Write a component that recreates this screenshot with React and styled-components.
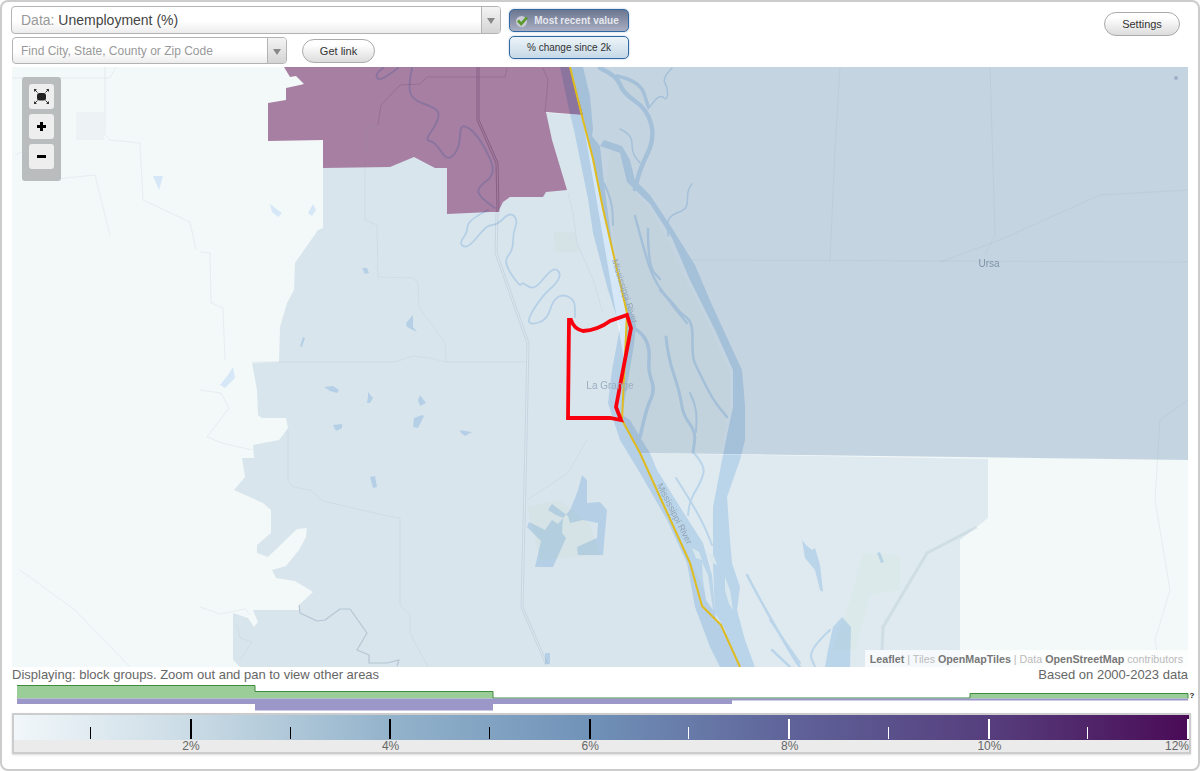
import styled, { createGlobalStyle } from "styled-components";

const GlobalStyle = createGlobalStyle`
  html, body {
    margin: 0;
    padding: 0;
    height: 771px;
    overflow: hidden;
    background: #fff;
    font-family: "Liberation Sans", Arial, sans-serif;
  }
`;

const Frame = styled.div`
  box-sizing: border-box;
  width: 1200px;
  height: 771px;
  border: 2px solid #ccc;
  border-radius: 8px;
  padding: 4px 10px 0 9px;
  background: #fff;
`;

const TopBar = styled.header`
  display: flex;
  align-items: flex-start;
  height: 61px;
`;

const SearchColumn = styled.div`
  display: flex;
  flex-direction: column;
  gap: 3px;
  width: 490px;
`;

const SelectBox = styled.div`
  box-sizing: border-box;
  display: flex;
  align-items: center;
  height: ${(p) => p.$height}px;
  width: ${(p) => p.$width}px;
  margin-left: ${(p) => p.$indent || 0}px;
  border: 1px solid #b3b3b3;
  border-radius: 4px;
  background: linear-gradient(#fff 55%, #ececec);
`;

const SelectText = styled.div`
  flex: 1;
  padding-left: ${(p) => p.$pad}px;
  font-size: ${(p) => p.$size}px;
  color: #999;
  white-space: nowrap;
`;

const DataValue = styled.span`
  color: #444;
`;

const SelectArrow = styled.div`
  box-sizing: border-box;
  width: 19px;
  height: 100%;
  display: flex;
  align-items: center;
  justify-content: center;
  border-left: 1px solid #b3b3b3;
  background: linear-gradient(#f4f4f4, #d4d4d4);
  border-radius: 0 3px 3px 0;
  &::after {
    content: "";
    margin-top: 2px;
    border-left: 4px solid transparent;
    border-right: 4px solid transparent;
    border-top: 6px solid #888;
  }
`;

const FindRow = styled.div`
  display: flex;
  align-items: center;
  gap: 15px;
`;

const PillButton = styled.button`
  box-sizing: border-box;
  width: ${(p) => p.$width}px;
  height: 24px;
  margin: ${(p) => p.$margin || 0};
  padding: 0;
  border: 1px solid #aaa;
  border-radius: 12px;
  background: linear-gradient(#fff 20%, #dcdcdc);
  color: #333;
  font: 11px "Liberation Sans", Arial, sans-serif;
`;

const ToggleColumn = styled.div`
  display: flex;
  flex-direction: column;
  gap: 4px;
  margin: 3px 0 0 8px;
`;

const Toggle = styled.button`
  box-sizing: border-box;
  display: flex;
  align-items: center;
  justify-content: center;
  gap: 5px;
  width: 120px;
  height: 23px;
  padding: 0 ${(p) => (p.$active ? "4px" : "0")} 0 0;
  border: 1px solid #2f6aa5;
  border-radius: 5px;
  box-shadow: 0 0 2px rgba(90, 120, 160, 0.5);
  font: ${(p) => (p.$active ? "bold " : "")}10px "Liberation Sans", Arial, sans-serif;
  color: ${(p) => (p.$active ? "#e6e8ee" : "#333")};
  background: ${(p) =>
    p.$active
      ? "linear-gradient(#6b7690, #a9aec2)"
      : "linear-gradient(#edf4f8, #c6d9e7)"};
`;

const MapPanel = styled.div`
  position: relative;
  width: 1176px;
  height: 600px;
  margin-left: 1px;
  overflow: hidden;
  background: #f3f8f9;
`;

const MapSvg = styled.svg`
  display: block;
  isolation: isolate;
`;

const WaterLayer = styled.g`
  mix-blend-mode: multiply;
`;

const Region = styled.polygon`
  fill: ${(p) => p.$fill};
`;

const WaterShape = styled.polygon`
  fill: #d6e8f8;
`;

const Stream = styled.path`
  fill: none;
  stroke: #d6e8f8;
  stroke-width: ${(p) => p.$w};
  stroke-linejoin: round;
  stroke-linecap: round;
`;

const Road = styled.polyline`
  fill: none;
  stroke: ${(p) => p.$color || "rgba(120, 145, 165, 0.1)"};
  stroke-width: ${(p) => p.$w || 1};
  stroke-linejoin: round;
`;

const PlaceLabel = styled.text`
  font: ${(p) => p.$size}px "Liberation Sans", Arial, sans-serif;
  fill: ${(p) => p.$color};
  text-anchor: middle;
`;

const ZoomPanel = styled.div`
  position: absolute;
  left: 10px;
  top: 10px;
  box-sizing: border-box;
  width: 39px;
  height: 104px;
  padding: 7px;
  display: flex;
  flex-direction: column;
  gap: 5px;
  background: #b9bdbd;
  border-radius: 3px;
`;

const ZoomButton = styled.div`
  width: 25px;
  height: 25px;
  display: flex;
  align-items: center;
  justify-content: center;
  background: #eee;
  border-radius: 3px;
`;

const Attribution = styled.div`
  position: absolute;
  right: 0;
  bottom: 0;
  box-sizing: border-box;
  height: 17px;
  padding: 0 5px;
  display: flex;
  align-items: center;
  gap: 3px;
  background: rgba(255, 255, 255, 0.7);
  font-size: 10.7px;
  color: #bbb;
  white-space: nowrap;
`;

const AttrLink = styled.b`
  color: #777;
`;

const StatusRow = styled.div`
  display: flex;
  justify-content: space-between;
  height: 18px;
  margin-left: 1px;
  width: 1176px;
  font-size: 13px;
  line-height: 15px;
  color: #666;
`;

const HistogramSvg = styled.svg`
  display: block;
  margin-left: 1px;
`;

const QuestionMark = styled.text`
  font: bold 8px "Liberation Sans", Arial, sans-serif;
  fill: #222;
`;

const Legend = styled.div`
  box-sizing: border-box;
  width: 1179px;
  height: 41px;
  margin: 1px 0 0 1px;
  border: 2px solid #ccc;
  box-shadow: 0 1px 2px rgba(0, 0, 0, 0.15);
`;

const LegendBar = styled.div`
  display: grid;
  grid-template-columns: 76.3px repeat(11, 1fr);
  height: 25px;
  padding-right: 2px;
  background: linear-gradient(
    to right,
    #f1f7fa 0%,
    #cadbe5 15%,
    #93b3cb 32%,
    #7092b8 49%,
    #5f6399 66%,
    #563e7d 83%,
    #4a0b56 100%
  );
`;

const TickCell = styled.div`
  display: flex;
  justify-content: flex-end;
  align-items: flex-end;
  padding-bottom: 1px;
`;

const Tick = styled.span`
  display: block;
  margin-right: ${(p) => (p.$major ? -2 : -1)}px;
  width: ${(p) => (p.$major ? 2 : 1)}px;
  height: ${(p) => (p.$major ? 20 : 12)}px;
  background: ${(p) => (p.$light ? "#fff" : "#000")};
`;

const LegendLabels = styled.div`
  display: grid;
  grid-template-columns: 177px repeat(5, 1fr);
  height: 12px;
  background: #ebebeb;
  font-size: 12px;
  line-height: 13px;
  color: #666;
`;

const LegendLabel = styled.div`
  text-align: right;
  & > span {
    display: inline-block;
    transform: translateX(${(p) => (p.$last ? "0" : "50%")});
  }
`;

const purple = "268,103 286,100 286,88 300,85 304,84 296,76 290,77 284,67 570,67 583,115 546,112 552,140 567,190 546,192 543,197 510,197 503,202 498,212 490,212 447,214 447,168 435,168 414,157 390,167 323,168 323,140 268,141";
const lightBlue = "323,168 323,228 318,230 295,263 294,290 287,303 280,327 279,362 252,363 257,390 258,415 262,418 286,418 288,428 279,440 253,445 254,458 242,458 245,477 234,490 263,503 271,510 271,533 257,545 257,553 268,557 297,529 307,528 306,537 299,550 286,566 272,570 276,578 295,581 313,592 299,605 299,610 253,610 258,622 254,627 248,618 233,613 233,660 240,667 740,667 640,453 582,115 500,110 400,150";
const darkBlue = "570,67 1188,67 1188,460 640,453 622,420 627,315 603,209 593,159 582,116";
const southEast = "640,453 988,459 988,518 960,540 960,667 740,667 721,625 702,606 690,563";

const islands = [
  "610,150 622,155 630,185 650,210 670,245 688,285 712,332 730,372 730,405 725,430 722,452 640,452 622,418 632,330 618,266 606,183",
  "617,78 638,83 645,104 625,91",
];

const waterBodies = [
  "560,67 583,67 590,96 593,129 592,136 600,146 604,183 615,266 627,300 636,325 634,345 628,380 622,415 630,420 640,437 650,453 657,470 680,507 703,543 712,575 716,620 755,667 720,667 710,647 695,607 687,563 667,520 640,473 620,440 608,403 612,370 620,327 608,290 593,233 588,199 574,130 570,114",
  "600,146 620,153 627,182 650,204 672,238 690,280 715,330 733,370 733,407 728,430 722,460 713,507 713,567 715,613 737,650 755,667 745,640 737,610 740,587 732,563 730,540 727,497 740,460 745,440 745,405 742,370 712,305 695,265 670,225 650,195 635,180 630,160 622,146 604,140",
  "582,475 587,480 587,503 600,502 607,510 603,555 578,555 577,547 597,538 598,523 583,520 570,523 568,516 552,504 548,510 556,515 563,518 562,533 566,538 553,567 535,567 541,541 527,527 529,522 545,530 552,520 558,524 570,510 575,498 578,490",
  "802,540 806,545 812,550 815,548 820,565 823,592 820,590 815,570 805,558",
  "833,627 842,617 851,627 850,667 825,667 828,650",
  "545,653 550,653 550,664 545,664",
  "233,367 235,378 225,388 220,385 228,375",
  "324,387 333,386 339,390 337,393 330,391",
  "368,392 373,398 370,403 367,403 368,397",
  "420,395 426,403 420,406 418,400",
  "422,415 424,416 418,428 413,427 414,418",
  "333,425 342,424 342,428 336,431",
  "460,430 472,432 465,436 461,433",
  "370,477 375,476 377,487 373,488",
  "270,204 282,213 278,217 272,212",
  "313,204 316,210 312,216 308,213",
  "362,268 367,268 369,273 365,274",
  "413,315 413,327 417,332 407,327 406,323",
  "303,337 305,338 302,347 300,346",
  "153,176 163,176 159,190",
  "877,553 880,552 884,562 881,563",
];

// land showing through the wide channels near the bottom of the river
const riverLand = [
  "725,577 730,590 733,610 729,604 725,590",
  "702,562 708,575 713,610 706,600 703,580",
  "692,548 699,552 702,560 696,558",
  "707,552 714,556 717,565 711,562",
];

const streams = [
  ["600,68 617,76 623,93 647,109 655,138 640,169 635,189", 4.5],
  ["617,76 640,81 648,106", 3.5],
  ["672,68 662,78 668,88 667,101 660,94 648,109", 1.5],
  ["620,129 632,134 632,153 640,163", 1.5],
  ["692,184 687,189 688,209 673,214 667,221 668,236", 1.5],
  ["604,183 612,200 613,225", 2],
  ["635,216 643,246 653,279 673,306 687,323", 2.5],
  ["648,229 648,266 660,279", 2.5],
  ["660,290 673,303 680,313 693,322 692,357 698,370 713,400 727,417", 2.5],
  ["632,327 643,333 650,350 648,370 655,390 647,407 640,437", 3.5],
  ["666,337 668,357 680,393 683,415 696,432 693,452", 3],
  ["690,393 697,407 696,432", 2],
  ["693,452 705,465 702,480 690,500 688,515", 2],
  ["676,478 690,500 704,525 712,545", 2],
  ["660,482 670,500 676,515 690,535", 1.5],
  ["747,575 760,600 793,657 800,667", 2.5],
  ["770,620 800,663", 2],
  ["772,650 790,667", 2.5],
  ["830,630 808,650 815,667", 2],
  ["488,210 468,220 467,233 460,242 463,247 470,246 487,225 497,225 510,212 518,220 513,233 513,250 503,262 520,287 522,282 530,288 537,287 553,267 561,273 557,283 543,295 528,318 530,325 547,320 553,300 563,294 575,300 575,317", 1.8],
  ["398,68 380,82 375,75 383,68", 2],
  ["412,68 408,87 413,100 433,107 440,113 435,127 425,140 435,142 448,162 460,147 460,125 470,128 482,142 497,173 477,188 480,197 495,208", 2],
];

const roads = [
  "378,125 366,127 365,170 365,220 377,225 378,277 413,278 418,283 419,307 445,343 446,362",
  "252,362 395,362 413,356 430,358 446,362 526,362",
  "288,430 288,480 293,487 310,490 323,501 383,515 400,518 400,605 410,615 410,633 428,667",
  "200,390 221,393 229,408 207,437 222,443 252,450",
  "200,607 220,614 245,609 250,615",
  "237,625 240,638 252,642 240,660",
  "200,252 210,253 211,303 223,308 225,360",
  "12,78 110,78 116,67",
  "105,67 105,135 110,140 140,143 143,200 190,222 196,250",
  "15,155 30,148 45,180 95,175 110,235",
  "20,570 75,610 130,667",
  "840,67 835,150 830,260",
  "692,260 1188,262",
  "990,67 995,235 985,255",
  "1188,190 1100,195 1000,240 940,262",
  "1188,400 1160,420 1155,500 1165,560 1170,590 1155,640 1160,667",
  "568,193 573,213 577,243 593,279 603,313",
  "587,440 568,473 527,500",
];

const purpleRoads = [
  "378,125 381,105 400,85 420,84 427,77 505,77 507,68",
  "543,68 548,80 545,112",
];

const highway = "497,212 496,253 528,343 526,440 522,607 547,665";
const stateLine = "570,67 582,116 593,159 603,209 627,313 622,420 640,453 690,563 702,606 721,625 740,667";

// rounds the corners of a point list so rivers don't look like straight segments
function smooth(points) {
  const pts = points.split(" ").map((p) => p.split(",").map(Number));
  let d = `M${pts[0][0]} ${pts[0][1]}`;
  for (let i = 1; i < pts.length - 1; i++) {
    const mx = (pts[i][0] + pts[i + 1][0]) / 2;
    const my = (pts[i][1] + pts[i + 1][1]) / 2;
    d += ` Q${pts[i][0]} ${pts[i][1]} ${mx} ${my}`;
  }
  const end = pts[pts.length - 1];
  return `${d} L${end[0]} ${end[1]}`;
}

const Fullscreen = () => (
  <svg width="17" height="17" viewBox="0 0 17 17">
    <rect x="4" y="5" width="9" height="7.5" rx="2.5" fill="#222" />
    <path d="M1 1h3L1 4zM16 1h-3L16 4zM1 16h3L1 13zM16 16h-3L16 13z" fill="#333" />
    <path d="M2 2l2.500 2.500M15 2l-2.500 2.500M2 15l2.500-2.500M15 15l-2.500-2.500" stroke="#333" strokeWidth="1" />
  </svg>
);

const Plus = () => (
  <svg width="11" height="11" viewBox="0 0 11 11">
    <path d="M4 1h3v3h3v3H7v3H4V7H1V4h3z" fill="#000" />
  </svg>
);

const Minus = () => (
  <svg width="11" height="11" viewBox="0 0 11 11">
    <rect x="1" y="4" width="9" height="3" fill="#000" />
  </svg>
);

const CheckMark = () => (
  <svg width="14" height="14" viewBox="0 0 14 14">
    <circle cx="6.500" cy="7.500" r="5.500" fill="#c9ccd6" />
    <path d="M2 7.500l2-2 2.200 2.500L11 2.500l2 1.800L6.200 12z" fill="#5d9a2e" />
  </svg>
);

const ticks = [1, 2, 3, 4, 5, 6, 7, 8, 9, 10, 11, 12];
const labels = [2, 4, 6, 8, 10, 12];

function MapDrawing() {
  return (
    <MapSvg width="1176" height="600" viewBox="12 67 1176 600">
      <Region points="76,112 104,112 104,140 76,140" $fill="#edf3f4" />
      <Region points={southEast} $fill="#deeaf0" />
      <Region points={lightBlue} $fill="#d8e5ed" />
      <Region points={darkBlue} $fill="#c5d4e1" />
      <Region points={purple} $fill="#a67fa3" />
      {islands.map((pts) => (
        <Region key={pts} points={pts} $fill="#c3d3de" />
      ))}
      <Region points="553,232 575,232 580,252 556,252" $fill="#d5e3e7" />
      <Region points="527,507 560,500 590,525 600,555 540,560" $fill="#d5e3e6" />
      <Region points="863,553 900,555 900,590 870,595 855,650 833,650 850,600" $fill="#dbe9eb" />
      {roads.map((pts) => (
        <Road key={pts} points={pts} />
      ))}
      {purpleRoads.map((pts) => (
        <Road key={pts} points={pts} $color="rgba(90, 50, 90, 0.2)" />
      ))}
      <Road points="478,67 478,120 497,163 498,212" $w={3} $color="rgba(90, 50, 90, 0.4)" />
      <Road points="478,67 478,120 497,163 498,212" $color="#a67fa3" />
      <Road points={highway} $w={3} $color="rgba(120, 145, 165, 0.18)" />
      <Road points={highway} $color="#dde8ef" />
      <Road points="299,605 300,613 317,621 325,620 340,609 350,609 367,633 357,650 369,655 369,663 387,663 399,660 397,666" $w={1.200} $color="rgba(100, 125, 150, 0.3)" />
      <Road points="977,527 927,553 883,627 882,650" $w={3} $color="rgba(120, 145, 165, 0.15)" />
      <WaterLayer>
        {waterBodies.map((pts) => (
          <WaterShape key={pts} points={pts} />
        ))}
        {streams.map(([pts, w]) => (
          <Stream key={pts} d={smooth(pts)} $w={w} />
        ))}
      </WaterLayer>
      {riverLand.map((pts) => (
        <Region key={pts} points={pts} $fill="#d8e6ed" />
      ))}
      <Road points={stateLine} $w={2} $color="#dfbb1f" />
      <path d="M569 320L571 320Q574 329 583 331Q598 330 610 321L627 315L631 328L616 407L621 420L610 418L568 418Z" fill="none" stroke="#f9000e" strokeWidth="3.800" />
      <circle cx="1176" cy="78" r="2" fill="#9fb0c4" />
      <PlaceLabel x="989" y="267" $size={10} $color="#7f93a8">Ursa</PlaceLabel>
      <PlaceLabel x="610" y="389" $size={10} $color="#9aaebf">La Grange</PlaceLabel>
      <PlaceLabel transform="translate(622 292) rotate(72)" $size={9} $color="#93a5b6">Mississippi River</PlaceLabel>
      <PlaceLabel transform="translate(672 515) rotate(63)" $size={9} $color="#93a5b6">Mississippi River</PlaceLabel>
    </MapSvg>
  );
}

function Histogram() {
  return (
    <HistogramSvg width="1184" height="27" viewBox="12 685 1184 27">
      <polygon points="17,685.500 255,685.500 255,691.500 493,691.500 493,698 970,698 970,693.500 1188,693.500 1188,698.500 17,698.500" fill="#9bcd99" />
      <polyline points="17,685.500 255,685.500 255,691.500 493,691.500 493,698 970,698 970,693.500 1188,693.500 1188,698.500" fill="none" stroke="#3f8c3f" strokeWidth="1" />
      <polygon points="17,698.500 1188,698.500 1188,700.500 970,700.500 732,700.500 732,704 493,704 493,710.500 255,710.500 255,704 17,704" fill="#9b97c9" />
      <QuestionMark x="1189.500" y="698">?</QuestionMark>
    </HistogramSvg>
  );
}

export default function App() {
  return (
    <>
      <GlobalStyle />
      <Frame>
        <TopBar>
          <SearchColumn>
            <SelectBox $height={28} $width={490}>
              <SelectText $size={14} $pad={9}>
                Data: <DataValue>Unemployment (%)</DataValue>
              </SelectText>
              <SelectArrow />
            </SelectBox>
            <FindRow>
              <SelectBox $height={27} $width={275} $indent={1}>
                <SelectText $size={12} $pad={8}>Find City, State, County or Zip Code</SelectText>
                <SelectArrow />
              </SelectBox>
              <PillButton $width={73}>Get link</PillButton>
            </FindRow>
          </SearchColumn>
          <ToggleColumn>
            <Toggle $active>
              <CheckMark />
              Most recent value
            </Toggle>
            <Toggle>% change since 2k</Toggle>
          </ToggleColumn>
          <PillButton $width={76} $margin="6px 8px 0 auto">Settings</PillButton>
        </TopBar>

        <MapPanel>
          <MapDrawing />
          <ZoomPanel>
            <ZoomButton><Fullscreen /></ZoomButton>
            <ZoomButton><Plus /></ZoomButton>
            <ZoomButton><Minus /></ZoomButton>
          </ZoomPanel>
          <Attribution>
            <AttrLink>Leaflet</AttrLink> | Tiles <AttrLink>OpenMapTiles</AttrLink> | Data <AttrLink>OpenStreetMap</AttrLink> contributors
          </Attribution>
        </MapPanel>

        <StatusRow>
          <span>Displaying: block groups. Zoom out and pan to view other areas</span>
          <span>Based on 2000-2023 data</span>
        </StatusRow>

        <Histogram />

        <Legend>
          <LegendBar>
            {ticks.map((n) => (
              <TickCell key={n}>
                <Tick $major={n % 2 === 0} $light={n > 6} />
              </TickCell>
            ))}
          </LegendBar>
          <LegendLabels>
            {labels.map((n) => (
              <LegendLabel key={n} $last={n === 12}>
                <span>{n}%</span>
              </LegendLabel>
            ))}
          </LegendLabels>
        </Legend>
      </Frame>
    </>
  );
}
